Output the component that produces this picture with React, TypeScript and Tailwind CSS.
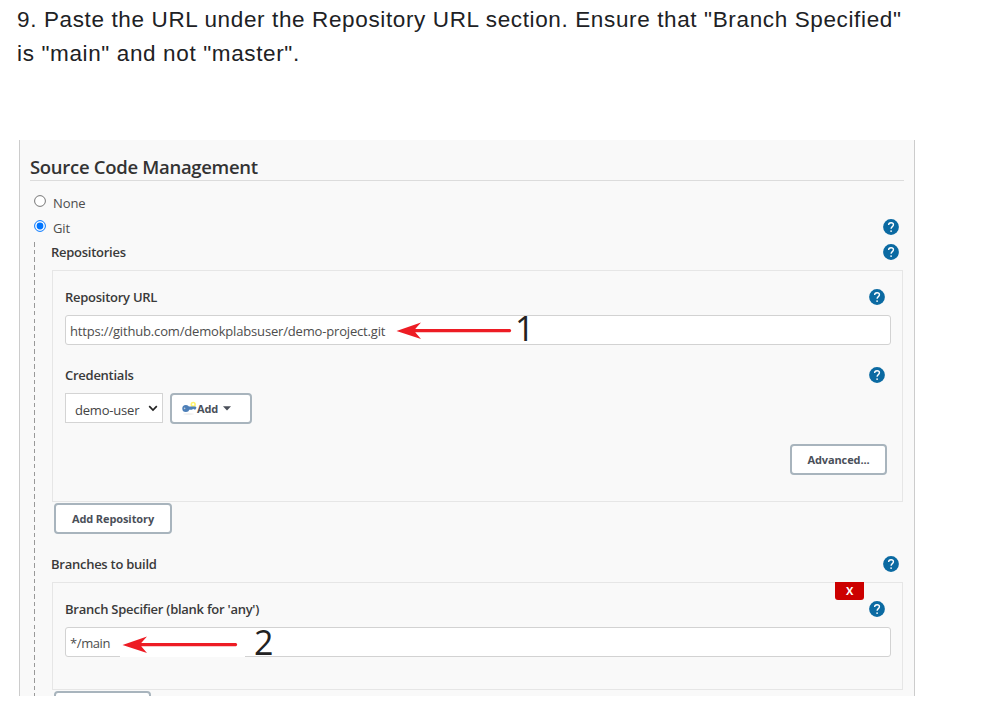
import React from "react";

function Help() {
  return (
    <svg className="-mt-px block h-4 w-4 shrink-0" viewBox="0 0 16 16">
      <circle cx="8" cy="8" r="7.9" fill="#0b6aa2" />
      <path d="M5.6 6.1C5.6 4.6 6.6 3.7 8.05 3.7s2.4.85 2.4 2.15c0 1.75-2.35 1.85-2.35 3.95" fill="none" stroke="#fff" strokeWidth="1.35" />
      <rect x="7.35" y="11.4" width="1.5" height="1.5" fill="#fff" />
    </svg>
  );
}

function Arrow() {
  return (
    <svg className="block h-5 w-[116px] shrink-0" viewBox="0 0 116 20">
      <path d="M.5 11 25 2.6 19.2 9.1H114q2.4 1.5 0 3.2H19.2L25 19Z" fill="#ed1c24" />
    </svg>
  );
}

function Radio({ label, checked }: { label: string; checked?: boolean }) {
  return (
    <span className="flex items-center">
      <svg className="-mt-[4px] block h-3 w-3" viewBox="0 0 12 12">
        <circle cx="6" cy="6" r="5.4" fill="#fff" stroke={checked ? "#0075ff" : "#767676"} strokeWidth="1" />
        {checked && <circle cx="6" cy="6" r="3.4" fill="#0075ff" />}
      </svg>
      <span className="ml-[7px] pt-[2px]">{label}</span>
    </span>
  );
}

function Label({ children }: { children: React.ReactNode }) {
  return <span className="pt-px font-semibold tracking-[-0.26px] text-[#3a3a3a]">{children}</span>;
}

const button =
  "flex items-center rounded-[4px] border-2 border-[#a8b4bd] bg-white pt-px font-['Open_Sans',sans-serif] text-[11px] font-bold text-[#4a4f59]";
const field =
  "flex h-[30px] w-[826px] items-center rounded-[3px] border border-[#d2d2d2] bg-white pl-[5px] text-[13px] text-[#4d4d4d]";

export default function App() {
  return (
    <main className="h-[709px] w-[989px] overflow-hidden bg-white">
      <div className="h-[140px] pt-[3px] pl-[17px] font-['Liberation_Sans',sans-serif] text-[22.5px] leading-[34px] tracking-[0.63px] whitespace-nowrap text-[#202124]">
        <p>9. Paste the URL under the Repository URL section. Ensure that "Branch Specified"</p>
        <p>is "main" and not "master".</p>
      </div>

      <section className="ml-[19px] h-[556px] w-[896px] overflow-hidden border-x border-[#ccc] bg-[#f9f9f9] font-['Open_Sans',sans-serif] text-[13px] tracking-[-0.1px] text-[#4d4d4d]">
        <h2 className="ml-[10px] flex h-[41px] w-[874px] items-center border-b border-[#dcdcdc] pt-[14px] text-[18.5px] font-semibold tracking-[-0.3px] whitespace-nowrap text-[#333]">
          Source Code Management
        </h2>
        <div className="mt-[9px] flex h-[25px] items-center pl-[14px]">
          <Radio label="None" />
        </div>
        <div className="flex h-[25px] items-center justify-between pr-[15px] pl-[14px]">
          <Radio label="Git" checked />
          <Help />
        </div>

        <div className="ml-[14px] h-[456px] bg-[repeating-linear-gradient(to_bottom,#999_0_4.6px,transparent_4.6px_7.65px)] bg-[length:1px_454px] bg-[position:0_2px] bg-no-repeat pl-[17px]">
          <div className="flex h-[25px] items-center justify-between pr-[15px]">
            <Label>Repositories</Label>
            <Help />
          </div>

          <div className="mt-[5px] ml-px h-[232px] w-[851px] border border-[#e6e6e6] pl-3">
            <div className="mt-[14px] flex h-[25px] w-[820px] items-center justify-between">
              <Label>Repository URL</Label>
              <Help />
            </div>
            <div className={`${field} mt-[5px]`}>
              <span className="-ml-px w-[326px] shrink-0 pt-[3px] tracking-[-0.17px]">https://github.com/demokplabsuser/demo-project.git</span>
              <Arrow />
              <span className="ml-[3px] -mt-[5px] text-[34px] leading-[30px] text-[#222]">1</span>
            </div>
            <div className="mt-[17px] flex h-[26px] w-[820px] items-center justify-between">
              <Label>Credentials</Label>
              <Help />
            </div>
            <div className="mt-[5px] flex">
              <div className="flex h-[30px] w-[98px] items-center border border-[#d4d4d4] bg-white pl-[9px] text-[#444]">
                <span className="w-[73px] pt-[5px] tracking-[-0.2px]">demo-user</span>
                <svg className="h-[7px] w-[10px]" viewBox="0 0 10 7">
                  <path d="M1.2 1.2 5 5l3.8-3.8" fill="none" stroke="#222" strokeWidth="1.7" />
                </svg>
              </div>
              <div className={`${button} ml-[7px] h-[31px] w-[82px] pl-[10px]`}>
                <svg className="-mt-[2px] h-4 w-[15px]" viewBox="0 0 15 16">
                  <ellipse cx="6.5" cy="14" rx="5.5" ry=".7" fill="#ececec" />
                  <circle cx="11.2" cy="4.4" r="1.9" fill="none" stroke="#fff36b" strokeWidth="1.6" />
                  <circle cx="3.8" cy="8.4" r="3.5" fill="#4d7fb8" />
                  <path d="M6.5 6.6H13.6l.9 1.2-1 1.6h-1.4l-1-.6-1 .9H6.5Z" fill="#4d7fb8" />
                  <circle cx="2.6" cy="8.4" r=".8" fill="#c3cfda" />
                </svg>
                <span>Add</span>
                <svg className="-mt-[2px] ml-[5px] h-[5px] w-2" viewBox="0 0 8 5">
                  <path d="M0 .2h8L4 4.6Z" fill="#4a4f59" />
                </svg>
              </div>
            </div>
            <div className={`${button} mt-5 ml-[725px] h-[31px] w-[97px] justify-center`}>Advanced...</div>
          </div>

          <div className={`${button} mt-px ml-[3px] h-[31px] w-[118px] justify-center`}>Add Repository</div>

          <div className="mt-[18px] flex h-[25px] items-center justify-between pr-[15px]">
            <Label>Branches to build</Label>
            <Help />
          </div>
          <div className="mt-[5px] ml-px h-[108px] w-[851px] border border-[#e6e6e6] pl-3">
            <div className="-mt-px ml-[770px] flex h-[18px] w-[29px] items-center justify-center rounded-b-[3px] bg-[#c00] text-[11px] font-bold text-white">
              X
            </div>
            <div className="-mt-[3px] flex h-[25px] w-[820px] items-center justify-between">
              <Label>Branch Specifier (blank for 'any')</Label>
              <Help />
            </div>
            <div className={`${field} relative mt-[5px]`}>
              <span className="absolute -bottom-px left-[54px] h-[2px] w-[125px] bg-white" />
              <span className="-ml-px w-[52px] shrink-0 pt-[3px] tracking-[-0.4px]">*/main</span>
              <span className="mt-[3px]">
                <Arrow />
              </span>
              <span className="-mt-px ml-[16px] text-[34px] leading-[30px] text-[#222]">2</span>
            </div>
          </div>
          <div className={`${button} mt-px ml-[3px] h-[31px] w-[97px]`} />
        </div>
      </section>
    </main>
  );
}
